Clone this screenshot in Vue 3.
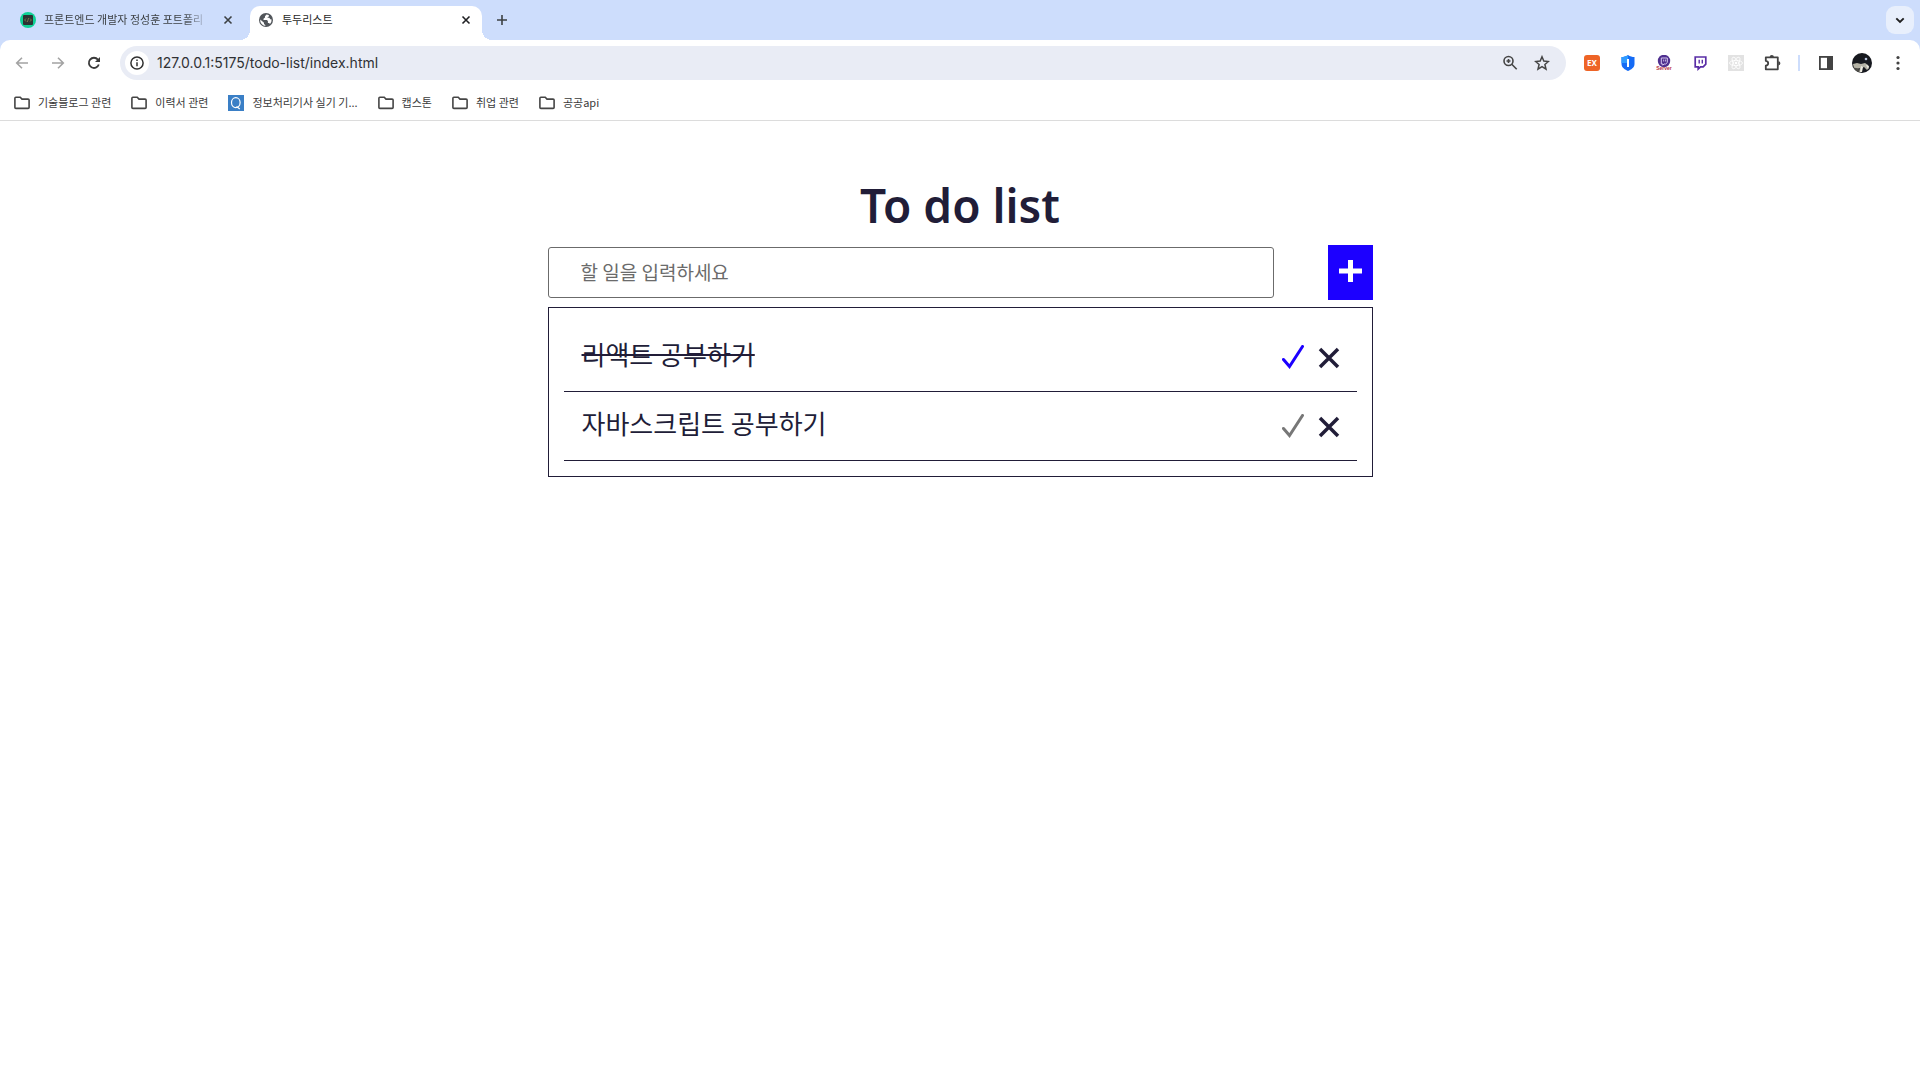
<script setup>
import { ref } from 'vue'

const bookmarks = [
  { label: '기술블로그 관련' },
  { label: '이력서 관련' },
  { label: '정보처리기사 실기 기...', site: true },
  { label: '캡스톤' },
  { label: '취업 관련' },
  { label: '공공api' },
]

const address = ref('127.0.0.1:5175/todo-list/index.html')
const draft = ref('')
const todos = ref([
  { id: 1, text: '리액트 공부하기', done: true },
  { id: 2, text: '자바스크립트 공부하기', done: false },
])

function addTodo() {
  const text = draft.value.trim()
  if (!text) return
  todos.value.push({ id: Date.now(), text, done: false })
  draft.value = ''
}

function removeTodo(id) {
  todos.value = todos.value.filter((todo) => todo.id !== id)
}
</script>

<template>
  <div class="browser">
    <header class="chrome">
      <div class="tab-strip">
        <div class="tab">
          <svg class="icon16" viewBox="0 0 16 16">
            <circle cx="8" cy="8" r="8" fill="#0fd196" />
            <rect x="3" y="3" width="10" height="10" rx="1" fill="#2c3333" />
            <path d="M6 6.5 4.6 8 6 9.500M10 6.500 11.400 8 10 9.500M8.600 6 7.400 10" fill="none" stroke="#8b8650" stroke-width=".8" />
          </svg>
          <span class="tab-title fade">프론트엔드 개발자 정성훈 포트폴리</span>
          <button class="plain tab-close" aria-label="탭 닫기">
            <svg class="icon16" viewBox="0 0 16 16"><path d="M4.500 4.500l7 7M11.500 4.500l-7 7" fill="none" stroke="#3c4043" stroke-width="1.600" /></svg>
          </button>
        </div>
        <div class="tab active">
          <svg class="icon16" viewBox="0 0 16 16">
            <circle cx="8" cy="8" r="7" fill="#51555a" />
            <path d="M8.500 2.400 7 4.200v1.300L5.500 6.800v1.100h3.400l1 1v2h1.200l.9 1.200a6 6 0 0 0 1.600-4.600l-1.300-.2-1-1.500H9.400V5.400L11 4.200l-.3-1.200zM2.200 7.500 6 10.800v1.300l1.300 1v.9A6 6 0 0 1 2.200 7.500z" fill="#fff" />
          </svg>
          <span class="tab-title">투두리스트</span>
          <button class="plain tab-close" aria-label="탭 닫기">
            <svg class="icon16" viewBox="0 0 16 16"><path d="M4.500 4.500l7 7M11.500 4.500l-7 7" fill="none" stroke="#202124" stroke-width="1.600" /></svg>
          </button>
        </div>
        <button class="plain new-tab" aria-label="새 탭">
          <svg class="icon16" viewBox="0 0 16 16"><path d="M8 3v10M3 8h10" fill="none" stroke="#3c4043" stroke-width="1.600" /></svg>
        </button>
        <button class="plain tab-search" aria-label="탭 검색">
          <svg class="icon16" viewBox="0 0 16 16"><path d="M4.300 6.300 8 10l3.700-3.700" fill="none" stroke="#1f1f1f" stroke-width="1.900" /></svg>
        </button>
      </div>

      <div class="panel">
        <div class="toolbar">
          <button class="plain cell" aria-label="뒤로">
            <svg class="icon16" viewBox="0 0 16 16"><path d="M14 8H3M8 2.700 2.700 8 8 13.300" fill="none" stroke="#a3a3a3" stroke-width="1.600" /></svg>
          </button>
          <button class="plain cell" aria-label="앞으로">
            <svg class="icon16" viewBox="0 0 16 16"><path d="M2 8h11M8 2.700 13.300 8 8 13.300" fill="none" stroke="#a3a3a3" stroke-width="1.600" /></svg>
          </button>
          <button class="plain cell" aria-label="새로고침">
            <svg class="icon16" viewBox="0 0 16 16">
              <path d="M12.800 9.500A5.100 5.100 0 1 1 11.900 4.600L13.200 6" fill="none" stroke="#3a3a3a" stroke-width="1.800" />
              <path d="M14 2v5H9z" fill="#3a3a3a" />
            </svg>
          </button>
          <div class="omnibox">
            <button class="plain site-info" aria-label="사이트 정보">
              <svg class="icon16" viewBox="0 0 16 16">
                <circle cx="8" cy="8" r="6.100" fill="none" stroke="#303030" stroke-width="1.500" />
                <path d="M8 7.300v4M8 4.400v1.600" stroke="#303030" stroke-width="1.500" />
              </svg>
            </button>
            <input v-model="address" class="address" type="text" aria-label="주소" />
            <button class="plain omni-action" aria-label="확대/축소">
              <svg class="icon16" viewBox="0 0 16 16">
                <circle cx="6.500" cy="6" r="4.500" fill="none" stroke="#454545" stroke-width="1.600" />
                <path d="M9.800 9.300 14.700 14.200M6.500 4v4M4.500 6h4" fill="none" stroke="#454545" stroke-width="1.600" />
              </svg>
            </button>
            <button class="plain omni-action" aria-label="북마크 추가">
              <svg class="icon16" viewBox="0 0 16 16"><path d="M8 1.800l1.800 4.300 4.600.4-3.500 3 1.100 4.600L8 11.700l-4 2.400 1.100-4.600-3.500-3 4.600-.4z" fill="none" stroke="#454545" stroke-width="1.500" /></svg>
            </button>
          </div>
          <button class="plain cell" aria-label="확장 프로그램 EX">
            <span class="ex-badge">EX</span>
          </button>
          <button class="plain cell" aria-label="보안">
            <svg class="icon16" viewBox="0 0 16 16">
              <path d="M8 0c2 1.500 4.300 2 6.500 2v7c0 3.500-3.500 5.700-6.500 7-3-1.300-6.500-3.500-6.500-7V2C3.700 2 6 1.500 8 0z" fill="#156bf5" />
              <path d="M8 0C6 1.500 3.700 2 1.500 2v6H8z" fill="#2f9bff" />
              <rect x="7" y="4" width="2" height="8" fill="#fff" />
            </svg>
          </button>
          <button class="plain cell" aria-label="Server">
            <svg class="icon16" viewBox="0 0 16 16">
              <circle cx="8" cy="6" r="6.200" fill="#4f2f8f" />
              <path d="M5.300 3h6v4.500L9.700 9H8l-1.200 1.200V9H5.300z" fill="none" stroke="#d5c8ee" />
              <path d="M7.700 4.500v2M9.600 4.500v2" stroke="#d5c8ee" stroke-width=".9" />
              <text x="8" y="15" text-anchor="middle" font-size="5" font-weight="700" fill="#b5303f">Server</text>
            </svg>
          </button>
          <button class="plain cell" aria-label="Twitch">
            <svg class="icon16" viewBox="0 0 16 16">
              <path d="M3.200 2h10.600v7.200l-2.600 2.600H8.500l-2.300 2.200v-2.200h-3z" fill="#fff" stroke="#5a2ea6" stroke-width="1.700" />
              <path d="M7.200 4.800v3.600M10.300 4.800v3.600" stroke="#5a2ea6" stroke-width="1.400" />
            </svg>
          </button>
          <button class="plain cell" aria-label="React">
            <svg class="icon16" viewBox="0 0 16 16">
              <rect width="16" height="16" fill="#e2e2e2" />
              <g fill="none" stroke="#fff" stroke-width=".8">
                <ellipse cx="8" cy="8" rx="6.500" ry="2.600" />
                <ellipse cx="8" cy="8" rx="6.500" ry="2.600" transform="rotate(60 8 8)" />
                <ellipse cx="8" cy="8" rx="6.500" ry="2.600" transform="rotate(120 8 8)" />
              </g>
              <circle cx="8" cy="8" r="1.300" fill="#fff" />
            </svg>
          </button>
          <button class="plain cell" aria-label="확장 프로그램">
            <svg class="icon18" viewBox="0 0 18 18">
              <path d="M2.800 3.300h12v12h-12v-3.600c3.200-.5 3.200-4.300 0-4.800z" fill="none" stroke="#434343" stroke-width="1.800" stroke-linejoin="round" />
              <path d="M6.700 3a2.100 2.100 0 0 1 4.200 0zM15.300 7.200a2.100 2.100 0 0 1 0 4.200z" fill="#434343" />
            </svg>
          </button>
          <span class="divider"></span>
          <button class="plain cell" aria-label="사이드 패널">
            <svg class="icon16" viewBox="0 0 16 16">
              <rect x="1.900" y="1.900" width="12.200" height="12.200" fill="none" stroke="#434343" stroke-width="1.800" />
              <path d="M9 2h5v12H9z" fill="#434343" />
            </svg>
          </button>
          <button class="plain cell" aria-label="프로필">
            <svg class="icon20" viewBox="0 0 20 20">
              <circle cx="10" cy="10" r="10" fill="#17191f" />
              <circle cx="14" cy="6" r="1.300" fill="#b9c4dd" />
              <path d="M1 11l4-1 4 1 4-1 3 2 1 3-2 2-3-3-2 1-1 4H7l1-4-3 1-3-1z" fill="#b5b3a6" />
              <path d="M9 13l2 1-1 5H8zM14 12l3 1-1 3z" fill="#eeece2" />
              <path d="M1.500 14.500l5 1 1 4A10 10 0 0 1 1.500 14.500z" fill="#4e4d48" />
            </svg>
          </button>
          <button class="plain cell" aria-label="메뉴">
            <svg class="icon16" viewBox="0 0 16 16" fill="#434343"><circle cx="8" cy="2.500" r="1.600" /><circle cx="8" cy="8" r="1.600" /><circle cx="8" cy="13.500" r="1.600" /></svg>
          </button>
        </div>

        <nav class="bookmarks">
          <a v-for="item in bookmarks" :key="item.label" class="bookmark" href="#">
            <svg v-if="item.site" class="icon16" viewBox="0 0 16 16">
              <rect width="16" height="16" fill="#3a7fc6" />
              <ellipse cx="7.800" cy="7.600" rx="4.300" ry="5" fill="none" stroke="#fff" stroke-width="1.200" />
              <path d="M8.500 11.500l3.300 2.500" stroke="#fff" stroke-width="1.200" />
            </svg>
            <svg v-else class="icon16" viewBox="0 0 16 16"><path d="M.9 3.200c0-.6.400-1 1-1h4.300L8 4.100h6.100c.6 0 1 .4 1 1v7.300c0 .6-.4 1-1 1H1.900c-.6 0-1-.4-1-1z" fill="none" stroke="#454545" stroke-width="1.600" /></svg>
            <span class="bookmark-label">{{ item.label }}</span>
          </a>
        </nav>
      </div>
    </header>

    <main class="todo">
      <h1>To do list</h1>
      <form class="entry" @submit.prevent="addTodo">
        <input v-model="draft" class="entry-input" type="text" placeholder="할 일을 입력하세요" aria-label="할 일" />
        <button class="add" type="submit" aria-label="추가">
          <svg viewBox="0 0 23 23"><path d="M11.500 0v22M0 11h23" fill="none" stroke="#fff" stroke-width="5" /></svg>
        </button>
      </form>
      <ul class="list">
        <li v-for="todo in todos" :key="todo.id" class="item" :class="{ done: todo.done }">
          <span class="item-text">{{ todo.text }}</span>
          <button class="plain check" aria-label="완료" @click="todo.done = !todo.done">
            <svg viewBox="0 0 22 24"><path d="M1.500 14.500 7.500 21.500 20.500 1.500" fill="none" stroke="currentColor" stroke-width="3" stroke-linecap="round" /></svg>
          </button>
          <button class="plain remove" aria-label="삭제" @click="removeTodo(todo.id)">
            <svg viewBox="0 0 22 22"><path d="M2 2l18 18M20 2 2 20" fill="none" stroke="currentColor" stroke-width="3.500" /></svg>
          </button>
        </li>
      </ul>
    </main>
  </div>
</template>

<style>
body {
  margin: 0;
  background: #fff;
}
</style>

<style scoped>
.browser {
  font-family: "Noto Sans CJK KR", sans-serif;
  color: #211d38;
}

.plain {
  display: flex;
  align-items: center;
  justify-content: center;
  padding: 0;
  border: 0;
  background: none;
  color: inherit;
  flex: none;
}

svg {
  display: block;
  flex: none;
}

.icon16 {
  width: 16px;
  height: 16px;
}

.icon18 {
  width: 18px;
  height: 18px;
}

.icon20 {
  width: 20px;
  height: 20px;
}

.chrome {
  background: #cdddfc;
}

.tab-strip {
  display: flex;
  align-items: center;
  height: 40px;
  padding-right: 6px;
}

.tab {
  display: flex;
  align-items: center;
  gap: 8px;
  box-sizing: border-box;
  width: 250px;
  padding: 0 14px 0 20px;
  font-size: 11px;
  line-height: 16px;
  color: #3c4043;
}

.tab-title {
  flex: 1;
  padding-bottom: 2px;
  white-space: nowrap;
}

.fade {
  margin-right: 2px;
  -webkit-mask-image: linear-gradient(to right, #000 84%, transparent);
  mask-image: linear-gradient(to right, #000 84%, transparent);
}

.active {
  position: relative;
  align-self: flex-end;
  width: 232px;
  height: 34px;
  padding: 0 8px 6px;
  border-radius: 10px 10px 0 0;
  background: #fff;
  color: #1f1f1f;
}

.active::before,
.active::after {
  content: "";
  position: absolute;
  bottom: 0;
  width: 10px;
  height: 10px;
}

.active::before {
  right: 100%;
  background: radial-gradient(circle at 0 0, transparent 10px, #fff 10px);
}

.active::after {
  left: 100%;
  background: radial-gradient(circle at 100% 0, transparent 10px, #fff 10px);
}

.new-tab {
  width: 28px;
  height: 28px;
  margin-left: 6px;
}

.tab-search {
  width: 28px;
  height: 28px;
  margin-left: auto;
  border-radius: 9px;
  background: #e8effc;
}

.panel {
  border-bottom: 1px solid #dcdcdc;
  border-radius: 10px 10px 0 0;
  background: #fff;
}

.toolbar {
  display: flex;
  align-items: center;
  height: 46px;
  padding: 0 4px;
}

.cell {
  width: 36px;
  height: 34px;
}

.omnibox {
  display: flex;
  flex: 1;
  align-items: center;
  box-sizing: border-box;
  height: 34px;
  margin: 0 8px;
  padding: 0 8px 0 5px;
  border-radius: 17px;
  background: #e9ecf5;
}

.site-info {
  width: 24px;
  height: 24px;
  border-radius: 50%;
  background: #fff;
}

.address {
  flex: 1;
  min-width: 0;
  margin-left: 8px;
  padding: 0;
  border: 0;
  outline: 0;
  background: none;
  font: 14px/20px Inter, sans-serif;
  color: #303134;
}

.omni-action {
  width: 32px;
  height: 32px;
}

.ex-badge {
  width: 16px;
  height: 16px;
  border-radius: 3px;
  background: #ee6426;
  font: 700 8px/16px "Noto Sans", sans-serif;
  color: #fff;
}

.divider {
  width: 2px;
  height: 16px;
  margin: 0 8px;
  background: #cdddfc;
}

.bookmarks {
  display: flex;
  gap: 20px;
  align-items: center;
  height: 34px;
  padding: 0 14px;
}

.bookmark {
  display: flex;
  gap: 8px;
  align-items: center;
  font-size: 11px;
  line-height: 16px;
  color: #3a3a3a;
  text-decoration: none;
  white-space: nowrap;
}

.bookmark-label {
  padding-bottom: 2px;
}

.todo {
  max-width: 825px;
  margin: 0 auto;
  padding-top: 52px;
}

h1 {
  margin: 0;
  font: 600 46px/64px "Noto Sans", sans-serif;
  text-align: center;
}

.entry {
  display: flex;
  align-items: center;
  justify-content: space-between;
  gap: 54px;
  margin: 8px 0 7px;
}

.entry-input {
  flex: 1;
  box-sizing: border-box;
  min-width: 0;
  height: 51px;
  padding: 0 32px 3px;
  border: 1px solid #6b6b6b;
  border-radius: 3px;
  background: #fff;
  font: 19px/28px "Noto Sans CJK KR", sans-serif;
  color: #211d38;
}

.entry-input::placeholder {
  color: #6b6b6b;
}

.add {
  display: flex;
  flex: none;
  justify-content: center;
  box-sizing: border-box;
  width: 45px;
  height: 55px;
  padding: 15px 0 0;
  border: 0;
  background: #1c00ff;
}

.add svg {
  width: 23px;
  height: 23px;
}

.list {
  margin: 0;
  padding: 15px;
  border: 1px solid #211d38;
  list-style: none;
}

.item {
  display: flex;
  align-items: center;
  height: 68px;
  padding: 0 17px 0 18px;
  border-bottom: 1px solid #211d38;
}

.item-text {
  margin-right: auto;
  padding-bottom: 6px;
  font-size: 26px;
  line-height: 36px;
}

.done .item-text {
  text-decoration: line-through;
  text-decoration-thickness: 2px;
}

.check {
  margin-right: 14px;
  color: #777;
}

.done .check {
  color: #1c00ff;
}

.check svg {
  width: 22px;
  height: 24px;
}

.remove {
  padding-top: 2px;
}

.remove svg {
  width: 22px;
  height: 22px;
}
</style>
